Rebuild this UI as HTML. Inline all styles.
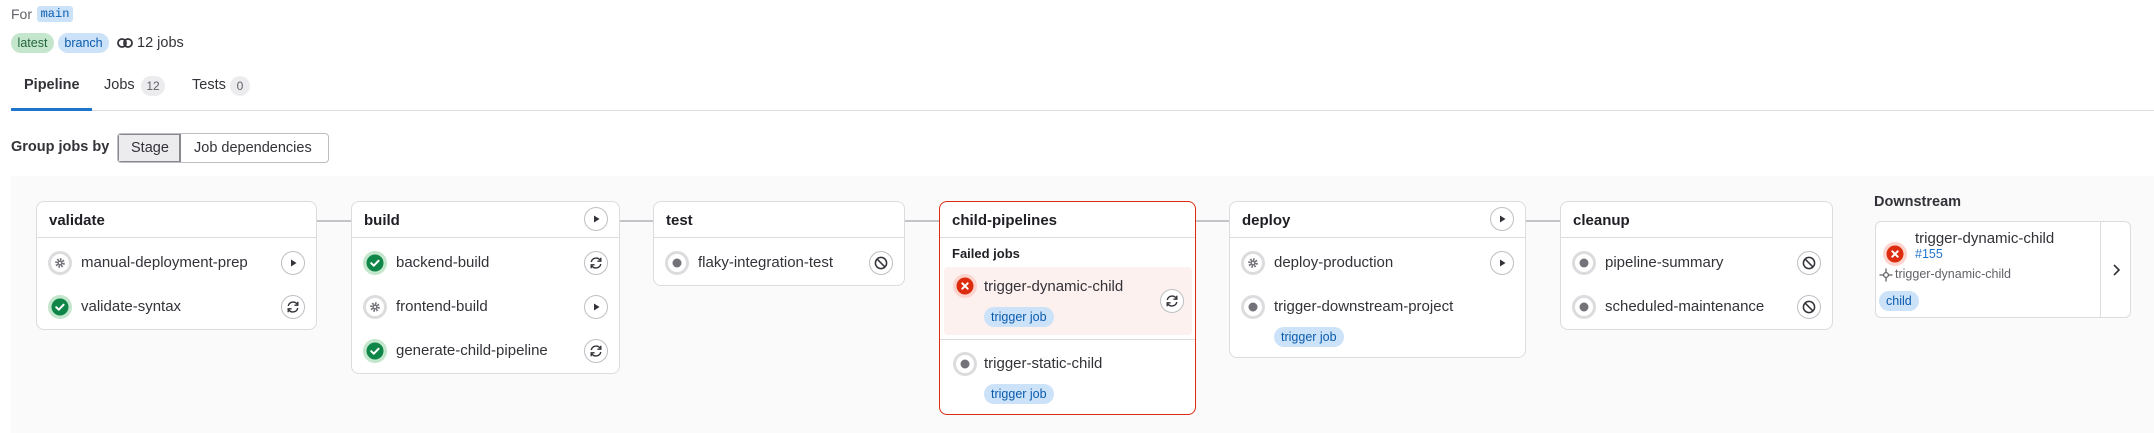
<!DOCTYPE html>
<html><head><meta charset="utf-8"><style>
*{box-sizing:border-box;margin:0;padding:0}
body{width:2154px;height:433px;overflow:hidden;background:#fff;font-family:"Liberation Sans",sans-serif;color:#333238;position:relative}
.a{position:absolute}
.pill{position:absolute;border-radius:10px;font-size:12.5px;line-height:20px;text-align:center;padding:0 7px;white-space:nowrap}
.blue{background:#cbe2f9;color:#0b5cad}
.green{background:#c3e6cd;color:#24663b}
.card{position:absolute;top:201px;background:#fff;border:1px solid #dcdcde;border-radius:8px}
.hd{position:absolute;left:0;right:0;top:0;height:36px;border-bottom:1px solid #dcdcde}
.hd span{position:absolute;left:12px;top:10px;font-weight:bold;font-size:15px;color:#1f1e24}
.st{position:absolute;width:24px;height:24px}
.nm{position:absolute;font-size:15px;color:#333238;white-space:nowrap}
.btn{position:absolute;width:24px;height:24px;border-radius:50%;border:1px solid #bfbfc3;background:#fff}
.btn svg{position:absolute;left:3px;top:3px}
.con{position:absolute;top:220px;height:2px;background:#c4c4c8}
</style></head><body>
<div class="a" style="left:11px;top:6px;font-size:14px;color:#626168;line-height:16px">For</div>
<div class="a" style="left:37px;top:6px;width:36px;height:16px;background:#cbe2f9;border-radius:3px;font-family:'Liberation Mono',monospace;font-size:12px;color:#0b5cad;line-height:16px;text-align:center">main</div>
<div class="pill green" style="left:11px;top:33px;width:43px;padding:0">latest</div>
<div class="pill blue" style="left:58px;top:33px;width:51px;padding:0">branch</div>
<svg class="a" style="left:117px;top:36px" width="16" height="14" viewBox="0 0 16 14"><circle cx="5" cy="7" r="4" fill="none" stroke="#333238" stroke-width="1.8"/><circle cx="11" cy="7" r="4" fill="none" stroke="#333238" stroke-width="1.8"/></svg>
<div class="a" style="left:137px;top:35px;font-size:14.5px;color:#333238">12 jobs</div>
<div class="a" style="left:24px;top:77px;font-size:14.5px;font-weight:bold;color:#333238">Pipeline</div>
<div class="a" style="left:104px;top:77px;font-size:14.5px;color:#333238">Jobs</div>
<div class="pill" style="left:141px;top:76px;width:24px;padding:0;background:#ececef;color:#626168;font-size:12px">12</div>
<div class="a" style="left:192px;top:77px;font-size:14.5px;color:#333238">Tests</div>
<div class="pill" style="left:230px;top:76px;width:20px;padding:0;background:#ececef;color:#626168;font-size:12px">0</div>
<div class="a" style="left:11px;top:110px;width:2143px;height:1px;background:#dcdcde"></div>
<div class="a" style="left:11px;top:108px;width:81px;height:3px;background:#1f75cb"></div>
<div class="a" style="left:11px;top:139px;font-size:14.5px;font-weight:bold;color:#333238">Group jobs by</div>
<div class="a" style="left:117px;top:133px;width:212px;height:30px;border:1px solid #bfbfc3;border-radius:4px;overflow:hidden">
<div class="a" style="left:0;top:0;width:63px;height:28px;background:#ececef;border-right:1px solid #89888d;box-shadow:inset 0 0 0 1px #89888d"></div>
<div class="a" style="left:13px;top:6px;font-size:14.5px;color:#333238">Stage</div>
<div class="a" style="left:76px;top:6px;font-size:14.5px;color:#333238">Job dependencies</div>
</div>
<div class="a" style="left:11px;top:176px;width:2143px;height:257px;background:#fafafb"></div>

<svg width="0" height="0" style="position:absolute"><defs>
<g id="manual"><circle cx="12" cy="12" r="12" fill="#dcdcde"/><circle cx="12" cy="12" r="9" fill="#fff"/><circle cx="12" cy="12" r="3.6" fill="none" stroke="#737278" stroke-width="2.4" stroke-dasharray="1.6 1.2"/><circle cx="12" cy="12" r="2.6" fill="#737278"/><circle cx="12" cy="12" r="1.1" fill="#fff"/></g>
<g id="ok"><circle cx="12" cy="12" r="12" fill="#c3e6cd"/><circle cx="12" cy="12" r="8.5" fill="#108548"/><path d="M8.2 12.2l2.6 2.5 4.8-5" fill="none" stroke="#fff" stroke-width="2" stroke-linecap="round" stroke-linejoin="round"/></g>
<g id="skip"><circle cx="12" cy="12" r="12" fill="#dcdcde"/><circle cx="12" cy="12" r="9" fill="#fff"/><circle cx="12" cy="12" r="4.5" fill="#737278"/></g>
<g id="fail"><circle cx="12" cy="12" r="12" fill="#fdd4cd"/><circle cx="12" cy="12" r="8.5" fill="#dd2b0e"/><path d="M9.3 9.3l5.4 5.4M14.7 9.3l-5.4 5.4" stroke="#fff" stroke-width="2" stroke-linecap="round"/></g>
<g id="play"><path d="M6 4.5v7l5.5-3.5z" fill="#333238"/></g>
<g id="retry"><path d="M3.2 7A5 5 0 0 1 12.2 5.2M12.8 9A5 5 0 0 1 3.8 10.8" fill="none" stroke="#333238" stroke-width="1.4"/><path d="M12.8 2.8v3.4H9.4M3.2 13.2V9.8h3.4" fill="none" stroke="#333238" stroke-width="1.4"/></g>
<g id="cancel"><circle cx="8" cy="8" r="5.6" fill="none" stroke="#333238" stroke-width="1.5"/><path d="M4.2 4.2l7.6 7.6" stroke="#333238" stroke-width="1.5"/></g>
</defs></svg>

<div class="con" style="left:317px;width:34px"></div>
<div class="con" style="left:620px;width:33px"></div>
<div class="con" style="left:905px;width:34px"></div>
<div class="con" style="left:1196px;width:33px"></div>
<div class="con" style="left:1526px;width:34px"></div>

<div class="card" style="left:36px;width:281px;height:129px">
<div class="hd"><span>validate</span></div>
<svg class="st" style="left:11px;top:49px"><use href="#manual"/></svg><div class="nm" style="left:44px;top:52px">manual-deployment-prep</div>
<div class="btn" style="right:11px;top:49px"><svg width="16" height="16"><use href="#play"/></svg></div>
<svg class="st" style="left:11px;top:93px"><use href="#ok"/></svg><div class="nm" style="left:44px;top:96px">validate-syntax</div>
<div class="btn" style="right:11px;top:93px"><svg width="16" height="16"><use href="#retry"/></svg></div>
</div>

<div class="card" style="left:351px;width:269px;height:173px">
<div class="hd"><span>build</span><div class="btn" style="right:11px;top:5px"><svg width="16" height="16"><use href="#play"/></svg></div></div>
<svg class="st" style="left:11px;top:49px"><use href="#ok"/></svg><div class="nm" style="left:44px;top:52px">backend-build</div>
<div class="btn" style="right:11px;top:49px"><svg width="16" height="16"><use href="#retry"/></svg></div>
<svg class="st" style="left:11px;top:93px"><use href="#manual"/></svg><div class="nm" style="left:44px;top:96px">frontend-build</div>
<div class="btn" style="right:11px;top:93px"><svg width="16" height="16"><use href="#play"/></svg></div>
<svg class="st" style="left:11px;top:137px"><use href="#ok"/></svg><div class="nm" style="left:44px;top:140px">generate-child-pipeline</div>
<div class="btn" style="right:11px;top:137px"><svg width="16" height="16"><use href="#retry"/></svg></div>
</div>

<div class="card" style="left:653px;width:252px;height:85px">
<div class="hd"><span>test</span></div>
<svg class="st" style="left:11px;top:49px"><use href="#skip"/></svg><div class="nm" style="left:44px;top:52px">flaky-integration-test</div>
<div class="btn" style="right:11px;top:49px"><svg width="16" height="16"><use href="#cancel"/></svg></div>
</div>

<div class="card" style="left:939px;width:257px;height:214px;border-color:#dd2b0e">
<div class="hd"><span>child-pipelines</span></div>
<div class="a" style="left:12px;top:44px;font-size:13px;font-weight:bold;color:#1f1e24">Failed jobs</div>
<div class="a" style="left:4px;top:65px;width:248px;height:68px;background:#fcf1ef;border-radius:4px"></div>
<svg class="st" style="left:13px;top:72px"><use href="#fail"/></svg><div class="nm" style="left:44px;top:76px">trigger-dynamic-child</div>
<div class="pill blue" style="left:44px;top:105px">trigger job</div>
<div class="btn" style="right:11px;top:87px"><svg width="16" height="16"><use href="#retry"/></svg></div>
<div class="a" style="left:0;right:0;top:137px;height:1px;background:#dcdcde"></div>
<svg class="st" style="left:13px;top:150px"><use href="#skip"/></svg><div class="nm" style="left:44px;top:153px">trigger-static-child</div>
<div class="pill blue" style="left:44px;top:182px">trigger job</div>
</div>

<div class="card" style="left:1229px;width:297px;height:157px">
<div class="hd"><span>deploy</span><div class="btn" style="right:11px;top:5px"><svg width="16" height="16"><use href="#play"/></svg></div></div>
<svg class="st" style="left:11px;top:49px"><use href="#manual"/></svg><div class="nm" style="left:44px;top:52px">deploy-production</div>
<div class="btn" style="right:11px;top:49px"><svg width="16" height="16"><use href="#play"/></svg></div>
<svg class="st" style="left:11px;top:93px"><use href="#skip"/></svg><div class="nm" style="left:44px;top:96px">trigger-downstream-project</div>
<div class="pill blue" style="left:44px;top:125px">trigger job</div>
</div>

<div class="card" style="left:1560px;width:273px;height:129px">
<div class="hd"><span>cleanup</span></div>
<svg class="st" style="left:11px;top:49px"><use href="#skip"/></svg><div class="nm" style="left:44px;top:52px">pipeline-summary</div>
<div class="btn" style="right:11px;top:49px"><svg width="16" height="16"><use href="#cancel"/></svg></div>
<svg class="st" style="left:11px;top:93px"><use href="#skip"/></svg><div class="nm" style="left:44px;top:96px">scheduled-maintenance</div>
<div class="btn" style="right:11px;top:93px"><svg width="16" height="16"><use href="#cancel"/></svg></div>
</div>

<div class="a" style="left:1874px;top:194px;font-size:14.5px;font-weight:bold;color:#333238">Downstream</div>
<div class="a" style="left:1875px;top:221px;width:256px;height:97px;background:#fff;border:1px solid #dcdcde;border-radius:6px">
<div class="a" style="left:224px;top:0;width:1px;height:95px;background:#dcdcde"></div>
<svg class="st" style="left:7px;top:20px"><use href="#fail"/></svg>
<div class="nm" style="left:39px;top:8px;font-size:15px">trigger-dynamic-child</div>
<div class="a" style="left:39px;top:25px;font-size:12.5px;color:#1f75cb">#155</div>
<svg class="a" style="left:3px;top:46px" width="14" height="14" viewBox="0 0 14 14"><circle cx="7" cy="7" r="2.4" fill="none" stroke="#626168" stroke-width="1.3"/><path d="M7 0.5v4M7 9.5v4M0.5 7h4M9.5 7h4" stroke="#626168" stroke-width="1.3"/></svg>
<div class="a" style="left:19px;top:45px;font-size:12.5px;color:#626168">trigger-dynamic-child</div>
<div class="pill blue" style="left:3px;top:69px">child</div>
<svg class="a" style="left:234px;top:40px" width="14" height="16" viewBox="0 0 14 16"><path d="M4 3l5 5-5 5" fill="none" stroke="#333238" stroke-width="1.6"/></svg>
</div>
</body></html>
